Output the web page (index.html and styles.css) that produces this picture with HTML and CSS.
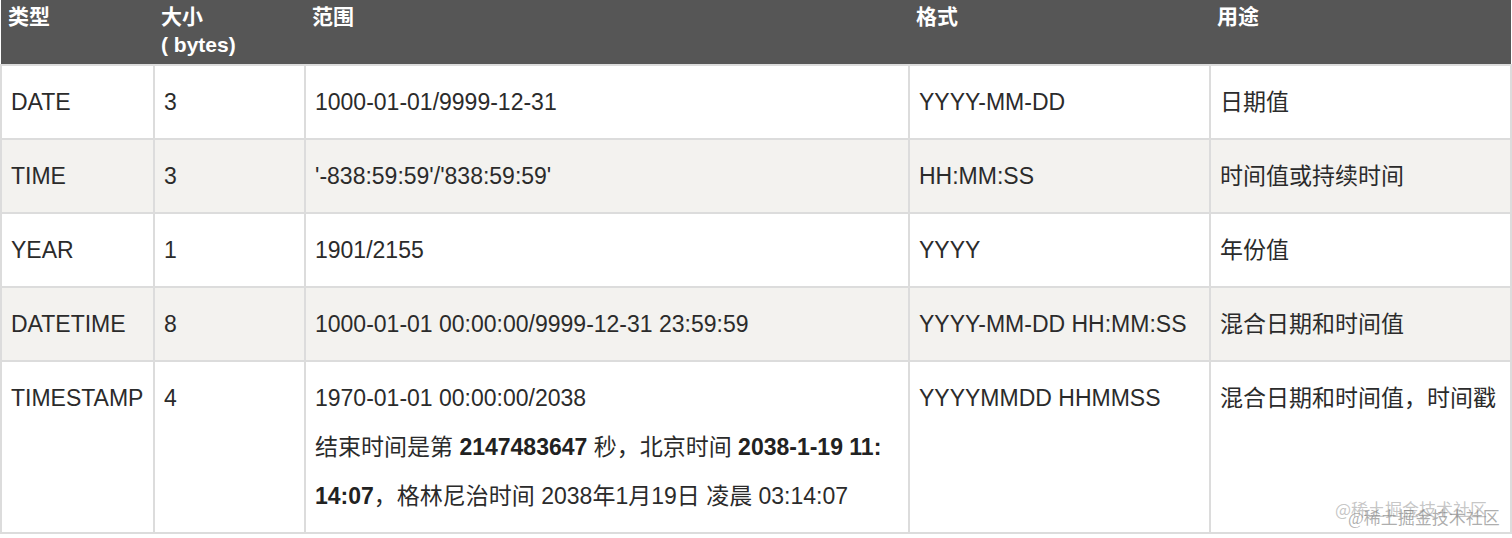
FILE: index.html
```html
<!DOCTYPE html>
<html lang="zh">
<head>
<meta charset="utf-8">
<title>MySQL 日期时间类型</title>
<link rel="stylesheet" href="styles.css">
</head>
<body>
<div class="wrap">
<table class="types">
  <colgroup>
    <col class="c1"><col class="c2"><col class="c3"><col class="c4"><col class="c5">
  </colgroup>
  <thead>
    <tr>
      <th>类型</th>
      <th>大小<br>( bytes)</th>
      <th>范围</th>
      <th>格式</th>
      <th>用途</th>
    </tr>
  </thead>
  <tbody>
    <tr>
      <td>DATE</td>
      <td>3</td>
      <td>1000-01-01/9999-12-31</td>
      <td>YYYY-MM-DD</td>
      <td>日期值</td>
    </tr>
    <tr>
      <td>TIME</td>
      <td>3</td>
      <td>'-838:59:59'/'838:59:59'</td>
      <td>HH:MM:SS</td>
      <td>时间值或持续时间</td>
    </tr>
    <tr>
      <td>YEAR</td>
      <td>1</td>
      <td>1901/2155</td>
      <td>YYYY</td>
      <td>年份值</td>
    </tr>
    <tr>
      <td>DATETIME</td>
      <td>8</td>
      <td>1000-01-01 00:00:00/9999-12-31 23:59:59</td>
      <td>YYYY-MM-DD HH:MM:SS</td>
      <td>混合日期和时间值</td>
    </tr>
    <tr>
      <td>TIMESTAMP</td>
      <td>4</td>
      <td>1970-01-01 00:00:00/2038<br>结束时间是第 <b>2147483647</b> 秒，北京时间 <b>2038-1-19 11:</b><br><b>14:07</b>，格林尼治时间 2038年1月19日 凌晨 03:14:07</td>
      <td>YYYYMMDD HHMMSS</td>
      <td>混合日期和时间值，时间戳</td>
    </tr>
  </tbody>
</table>
<div class="wm wm-a">@稀土掘金技术社区</div>
<div class="wm wm-b">@稀土掘金技术社区</div>
</div>
</body>
</html>
```

FILE: styles.css
```css
html, body {
  margin: 0;
  padding: 0;
  background: #ffffff;
}

.wrap {
  position: relative;
  width: 1512px;
  height: 538px;
  overflow: hidden;
}

.types {
  width: 1510px;
  border-collapse: collapse;
  table-layout: fixed;
  font-family: "Liberation Sans", Arial, "Noto Sans CJK SC", sans-serif;
  color: #2b2b2b;
}

.c1 { width: 153px; }
.c2 { width: 151px; }
.c3 { width: 604px; }
.c4 { width: 301px; }
.c5 { width: 301px; }

.types th {
  background: #565656;
  color: #ffffff;
  font-size: 21px;
  font-weight: bold;
  line-height: 28px;
  text-align: left;
  vertical-align: top;
  padding: 3px 7px 5px;
  border: none;
  border-bottom: 2px solid #dcdcdc;
}

.types td {
  font-size: 23px;
  line-height: 49px;
  vertical-align: top;
  padding: 12px 9px 11px 9px;
  border: 2px solid #dcdcdc;
  white-space: nowrap;
  overflow: hidden;
}

.types tbody tr:nth-child(even) td {
  background: #f3f2ef;
}

.types b {
  font-weight: bold;
  color: #222;
}

.wm {
  position: absolute;
  font-size: 17px;
  line-height: 17px;
  white-space: nowrap;
  font-family: "Noto Sans CJK SC", sans-serif;
}

.wm-a {
  left: 1335px;
  top: 500px;
  color: rgba(150, 150, 150, 0.55);
}

.wm-b {
  left: 1348px;
  top: 510px;
  color: rgba(120, 120, 120, 0.6);
  font-family: "Liberation Serif", "Noto Sans CJK SC", serif;
}
```
